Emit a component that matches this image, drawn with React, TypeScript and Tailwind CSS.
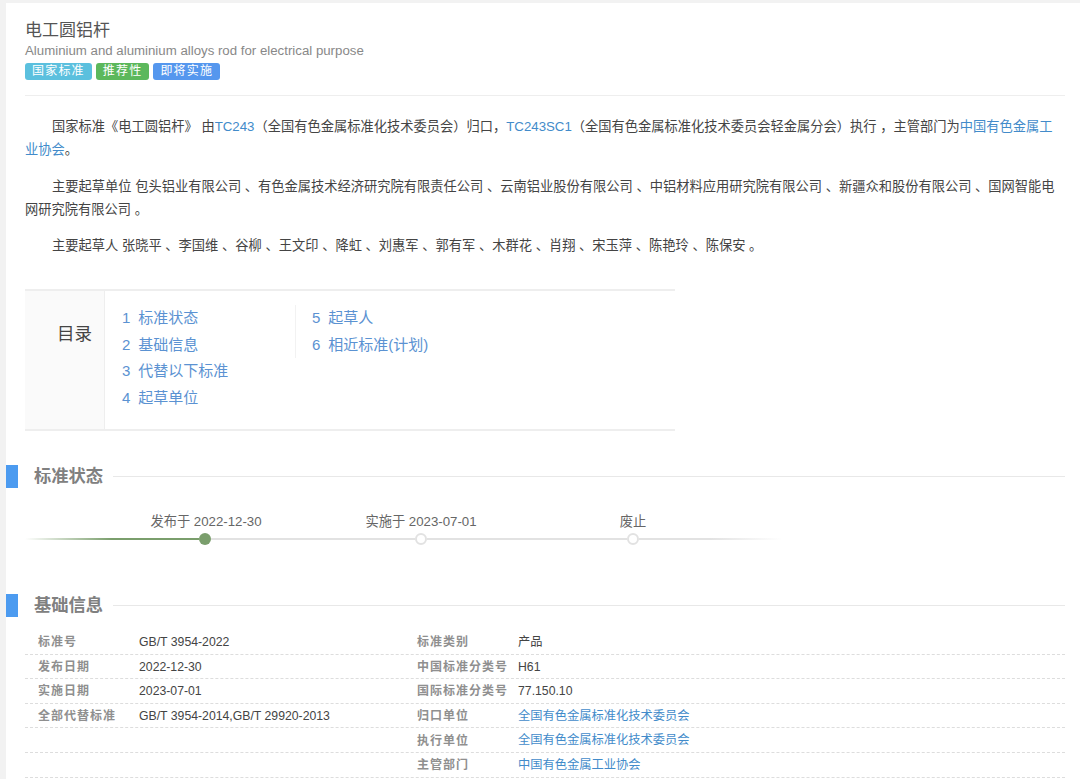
const font = "font-['Liberation_Sans','Noto_Sans_CJK_SC',sans-serif]";
const linkCls = "text-[#428bca]";

function SectionTitle({ title }: { title: string }) {
  return (
    <div className="flex items-center h-[23px]">
      <div className="w-3 h-[23px] bg-[#4c9bf0]" />
      <h2 className="ml-4 text-[17.25px] font-bold text-[#808080]">{title}</h2>
      <div className="ml-[10px] mr-[15px] grow h-px bg-[#e8e8e8]" />
    </div>
  );
}

function InfoRow({
  l1,
  v1,
  l2,
  v2,
  link,
}: {
  l1?: string;
  v1?: string;
  l2: string;
  v2: string;
  link?: boolean;
}) {
  return (
    <div className="flex items-center h-[24.6px] pt-px border-b border-dashed border-[#ddd] text-[12.25px]">
      <div className="w-[114px] pl-[13px] shrink-0 text-[12px] text-[#8f8f8f] font-bold tracking-[1px]">{l1}</div>
      <div className="w-[278px] shrink-0 text-[#444]">{v1}</div>
      <div className="w-[101px] shrink-0 text-[12px] text-[#8f8f8f] font-bold tracking-[1px] whitespace-nowrap">{l2}</div>
      <div className={link ? linkCls : "text-[#444]"}>{v2}</div>
    </div>
  );
}

function App() {
  return (
    <div className={`${font} w-[1080px] h-[779px] overflow-hidden bg-[#f2f2f2] pl-[6px] pt-[3px]`}>
      <div className="bg-white h-full">
        <div className="pl-[19px] pr-[15px]">
          <h1 className="pt-[16px] text-[17px] leading-[24px] text-[#555]">电工圆铝杆</h1>
          <p className="text-[13.25px] leading-[20px] -mt-[2px] text-[#888]">
            Aluminium and aluminium alloys rod for electrical purpose
          </p>
          <div className="flex gap-1 mt-[2px] text-white text-xs tracking-[1.2px] leading-[17px]">
            <span className="px-[7px] rounded-[3px] bg-[#5bc0de]">国家标准</span>
            <span className="px-[7px] rounded-[3px] bg-[#5cb85c]">推荐性</span>
            <span className="px-[7px] rounded-[3px] bg-[#5597ee]">即将实施</span>
          </div>
          <div className="h-px bg-[#eee] mt-[15px]" />

          <div className="text-[13.25px] leading-[23px] text-[#444] mt-[19px]">
            <p className="indent-[27px]">
              国家标准《电工圆铝杆》 由<span className={linkCls}>TC243</span>（全国有色金属标准化技术委员会）归口，
              <span className={linkCls}>TC243SC1</span>（全国有色金属标准化技术委员会轻金属分会）执行 ，主管部门为
              <span className={linkCls}>中国有色金属工业协会</span>。
            </p>
            <p className="indent-[27px] mt-[14px]">
              主要起草单位 包头铝业有限公司 、有色金属技术经济研究院有限责任公司 、云南铝业股份有限公司 、中铝材料应用研究院有限公司 、新疆众和股份有限公司 、国网智能电网研究院有限公司 。
            </p>
            <p className="indent-[27px] mt-[13px]">
              主要起草人 张晓平 、李国维 、谷柳 、王文印 、降虹 、刘惠军 、郭有军 、木群花 、肖翔 、宋玉萍 、陈艳玲 、陈保安 。
            </p>
          </div>

          <div className="flex w-[650px] h-[142px] mt-[32px] border-y-2 border-[#eee]">
            <div className="w-[80px] shrink-0 bg-[#fafafa] border-r border-[#eee] text-[17.5px] text-[#444] text-right pr-3 pt-[31px] leading-[24px]">
              目录
            </div>
            <div className="flex pt-[14px] text-[15px] text-[#5b92d2] leading-[26.6px]">
              <ul className="w-[190px] pl-[17px]">
                <li><span className="mr-2">1</span>标准状态</li>
                <li><span className="mr-2">2</span>基础信息</li>
                <li><span className="mr-2">3</span>代替以下标准</li>
                <li><span className="mr-2">4</span>起草单位</li>
              </ul>
              <ul className="h-[53px] border-l border-[#f2f2f2] pl-[16px]">
                <li><span className="mr-2">5</span>起草人</li>
                <li><span className="mr-2">6</span>相近标准(计划)</li>
              </ul>
            </div>
          </div>
        </div>

        <div className="mt-[34px]">
          <SectionTitle title="标准状态" />
        </div>

        <div className="pl-[19px] mt-[25px]">
          <div className="flex text-[13.25px] text-[#666] leading-[18px]">
            <span className="ml-[101px] w-[160px] text-center">发布于 2022-12-30</span>
            <span className="ml-[55px] w-[160px] text-center">实施于 2023-07-01</span>
            <span className="ml-[52px] w-[160px] text-center">废止</span>
          </div>
          <div className="flex items-center w-[757px] mt-[2px] h-3">
            <div className="w-[174px] h-[2px] bg-gradient-to-r from-transparent via-[#7a9e6c] to-[#7a9e6c]" />
            <div className="w-3 h-3 rounded-full bg-[#7a9e6c] shrink-0" />
            <div className="w-[204px] h-[2px] bg-[#e2e2e2]" />
            <div className="w-3 h-3 rounded-full bg-white border-2 border-[#e2e2e2] shrink-0" />
            <div className="w-[200px] h-[2px] bg-[#e2e2e2]" />
            <div className="w-3 h-3 rounded-full bg-white border-2 border-[#e2e2e2] shrink-0" />
            <div className="grow h-[2px] bg-gradient-to-r from-[#e2e2e2] via-[#e2e2e2] to-transparent" />
          </div>
        </div>

        <div className="mt-[49px]">
          <SectionTitle title="基础信息" />
        </div>

        <div className="ml-[19px] mr-[15px] mt-[13px]">
          <InfoRow l1="标准号" v1="GB/T 3954-2022" l2="标准类别" v2="产品" />
          <InfoRow l1="发布日期" v1="2022-12-30" l2="中国标准分类号" v2="H61" />
          <InfoRow l1="实施日期" v1="2023-07-01" l2="国际标准分类号" v2="77.150.10" />
          <InfoRow l1="全部代替标准" v1="GB/T 3954-2014,GB/T 29920-2013" l2="归口单位" v2="全国有色金属标准化技术委员会" link />
          <InfoRow l2="执行单位" v2="全国有色金属标准化技术委员会" link />
          <InfoRow l2="主管部门" v2="中国有色金属工业协会" link />
        </div>
      </div>
    </div>
  );
}

export default App;
